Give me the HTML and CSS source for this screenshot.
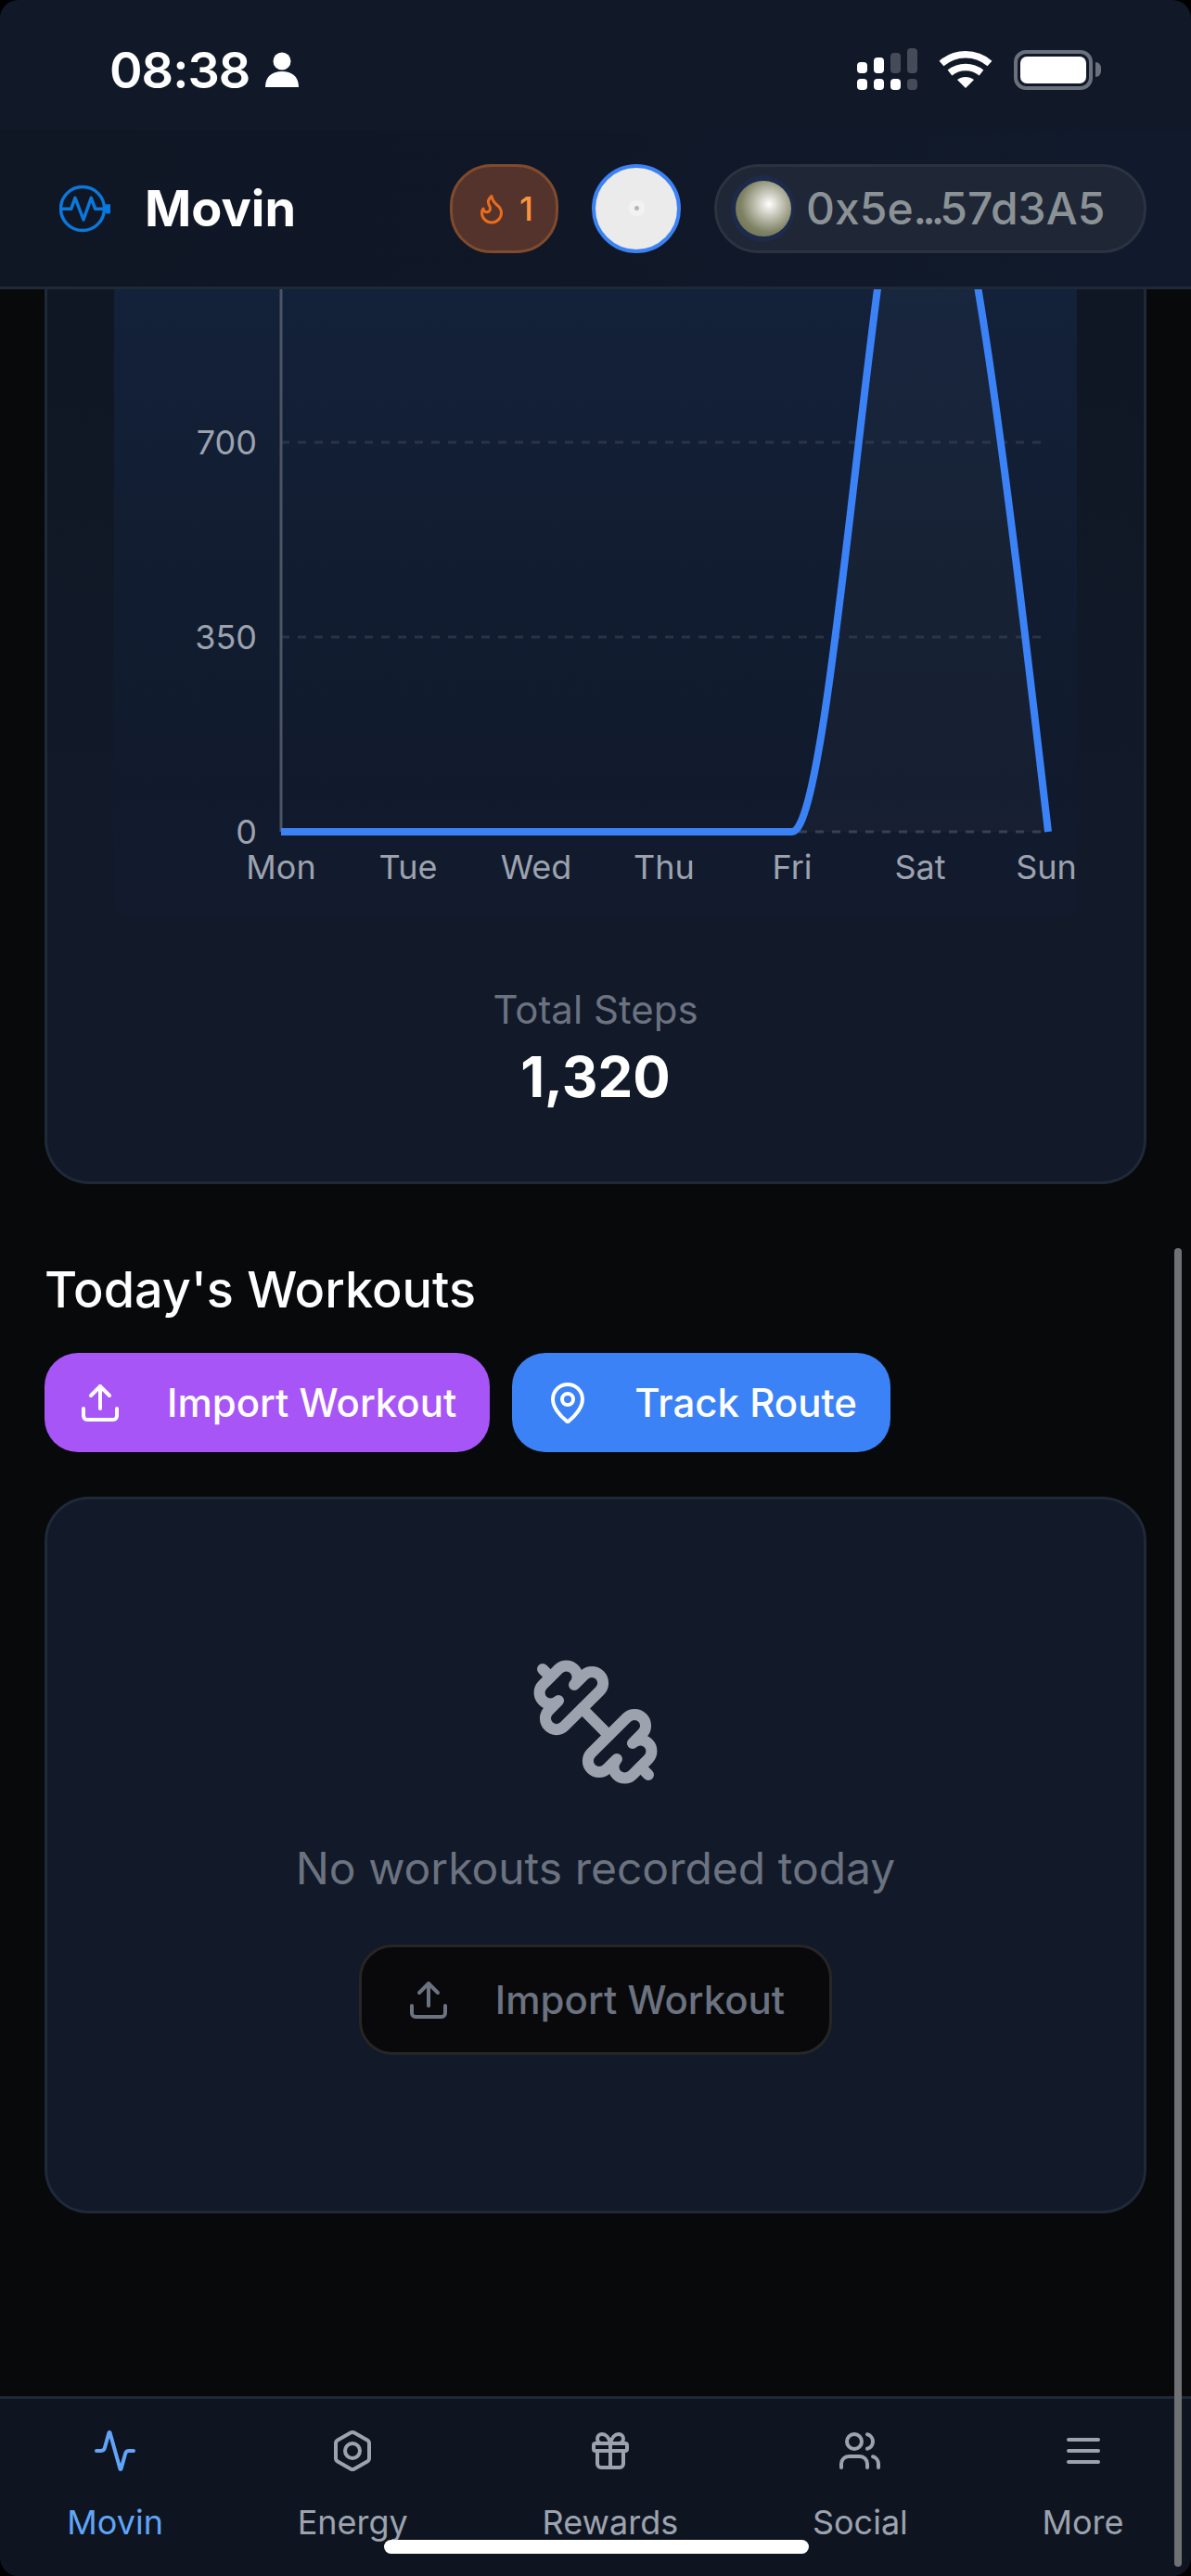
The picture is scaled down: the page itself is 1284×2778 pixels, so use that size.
FILE: index.html
```html
<!DOCTYPE html>
<html lang="en">
<head>
    <meta charset="UTF-8">
    <meta name="viewport" content="width=device-width, initial-scale=1.0">
    <title>Movin</title>
    <link rel="stylesheet" href="styles.css">
</head>
<body>
    <div class="screen">
        <div class="top">
            <div class="status-bar">
                <div class="status-left">
                    <span class="clock">08:38</span>
                    <svg class="person" viewBox="0 0 36 38"><circle cx="18" cy="10" r="9.5" fill="#fff"/><path d="M0 38c0-12 8-17 18-17s18 5 18 17z" fill="#fff"/></svg>
                </div>
                <div class="status-right">
                    <svg class="signal" viewBox="0 0 66 46">
                        <rect x="0" y="15" width="11" height="12" rx="4" fill="#fff"/>
                        <rect x="18" y="10" width="11" height="17" rx="4" fill="#fff"/>
                        <rect x="36" y="5" width="11" height="22" rx="4" fill="#454b58"/>
                        <rect x="54" y="0" width="11" height="27" rx="4" fill="#454b58"/>
                        <rect x="0" y="33" width="11" height="12" rx="4" fill="#fff"/>
                        <rect x="18" y="33" width="11" height="12" rx="4" fill="#fff"/>
                        <rect x="36" y="33" width="11" height="12" rx="4" fill="#fff"/>
                        <rect x="54" y="33" width="11" height="12" rx="4" fill="#454b58"/>
                    </svg>
                    <svg class="wifi" viewBox="0 0 58 42" fill="none" stroke="#fff" stroke-width="7.5">
                        <path d="M3 14.5c15-13 37-13 52 0"/>
                        <path d="M12 24.500c10-8 24-8 34 0"/>
                        <path d="M29 41 20 32c5-4 13-4 18 0z" fill="#fff" stroke="none"/>
                    </svg>
                    <div class="battery"><div class="battery-fill"></div></div>
                    <div class="battery-cap"></div>
                </div>
            </div>
            <header class="app-header">
                <div class="brand">
                    <svg class="brand-icon" viewBox="0 0 56 56" fill="none" stroke="#0a78dc" stroke-width="3.500">
                        <circle cx="25" cy="28" r="23.500"/>
                        <path d="M1 28.300h11.700L17 16.300l9 23.700 8.300-23.700 4.400 12H50" stroke-linejoin="round"/>
                        <rect x="50" y="23.300" width="5" height="10" fill="#0a78dc" stroke="none"/>
                    </svg>
                    <span class="brand-name">Movin</span>
                </div>
                <div class="header-actions">
                    <div class="streak">
                        <svg class="icon-flame" viewBox="0 0 24 24" fill="none" stroke="#ea6c1c" stroke-width="2" stroke-linecap="round" stroke-linejoin="round"><path d="M8.500 14.500A2.500 2.500 0 0 0 11 12c0-1.380-.5-2-1-3-1.072-2.143-.224-4.054 2-6 .5 2.500 2 4.900 4 6.500 2 1.600 3 3.500 3 5.500a7 7 0 1 1-14 0c0-1.153.433-2.294 1-3a2.500 2.500 0 0 0 2.500 2.500z"/></svg>
                        <span>1</span>
                    </div>
                    <div class="avatar"><span class="avatar-dot"></span></div>
                    <div class="wallet">
                        <span class="wallet-ring"><span class="wallet-orb"></span></span>
                        <span class="wallet-address">0x5e<span class="dots">...</span>57d3A5</span>
                    </div>
                </div>
            </header>
        </div>

        <main class="content">
            <section class="card steps-card">
                <div class="chart-panel">
                    <svg class="chart" viewBox="0 0 1038 675">
                        <path class="area" d="M731 585C777 585 823 -207 869 -207C915 -207 961 189 1007 585Z"/>
                        <line class="grid" x1="180" y1="165" x2="999" y2="165"/>
                        <line class="grid" x1="180" y1="375" x2="999" y2="375"/>
                        <line class="grid base" x1="180" y1="585" x2="1007" y2="585"/>
                        <line class="y-axis" x1="180" y1="0" x2="180" y2="585"/>
                        <path class="line" d="M180 585H731C777 585 823 -207 869 -207C915 -207 961 189 1007 585"/>
                        <text class="tick" x="154" y="178" text-anchor="end">700</text>
                        <text class="tick" x="154" y="388" text-anchor="end">350</text>
                        <text class="tick" x="154" y="598" text-anchor="end">0</text>
                        <text class="tick" x="180" y="636" text-anchor="middle">Mon</text>
                        <text class="tick" x="317" y="636" text-anchor="middle">Tue</text>
                        <text class="tick" x="455" y="636" text-anchor="middle">Wed</text>
                        <text class="tick" x="593" y="636" text-anchor="middle">Thu</text>
                        <text class="tick" x="731" y="636" text-anchor="middle">Fri</text>
                        <text class="tick" x="869" y="636" text-anchor="middle">Sat</text>
                        <text class="tick" x="1005" y="636" text-anchor="middle">Sun</text>
                    </svg>
                </div>
                <div class="steps-total">
                    <div class="steps-label">Total Steps</div>
                    <div class="steps-value">1,320</div>
                </div>
            </section>

            <h2 class="section-title">Today's Workouts</h2>
            <div class="workout-actions">
                <button class="btn btn-purple">
                    <svg class="btn-icon" viewBox="0 0 24 24"><path d="M21 15v4a2 2 0 0 1-2 2H5a2 2 0 0 1-2-2v-4"/><polyline points="17 8 12 3 7 8"/><line x1="12" x2="12" y1="3" y2="15"/></svg>
                    Import Workout
                </button>
                <button class="btn btn-blue">
                    <svg class="btn-icon" viewBox="0 0 24 24"><path d="M20 10c0 4.993-5.539 10.193-7.399 11.799a1 1 0 0 1-1.202 0C9.539 20.193 4 14.993 4 10a8 8 0 0 1 16 0"/><circle cx="12" cy="10" r="3"/></svg>
                    Track Route
                </button>
            </div>

            <section class="card empty-card">
                <svg class="dumbbell" viewBox="0 0 24 24"><g transform="matrix(-1 0 0 1 24 0)"><path d="M17.596 12.768a2 2 0 1 0 2.829-2.829l-1.768-1.767a2 2 0 0 0 2.828-2.829l-2.828-2.828a2 2 0 0 0-2.829 2.828l-1.767-1.768a2 2 0 1 0-2.829 2.829z"/><path d="m2.500 21.500 1.400-1.400"/><path d="m20.100 3.900 1.400-1.400"/><path d="M5.343 21.485a2 2 0 1 0 2.829-2.828l1.767 1.768a2 2 0 1 0 2.829-2.829l-6.364-6.364a2 2 0 1 0-2.829 2.829l1.768 1.767a2 2 0 0 0-2.828 2.829z"/><path d="m9.600 14.400 4.800-4.800"/></g></svg>
                <p class="empty-text">No workouts recorded today</p>
                <button class="btn btn-dark">
                    <svg class="btn-icon" viewBox="0 0 24 24"><path d="M21 15v4a2 2 0 0 1-2 2H5a2 2 0 0 1-2-2v-4"/><polyline points="17 8 12 3 7 8"/><line x1="12" x2="12" y1="3" y2="15"/></svg>
                    Import Workout
                </button>
            </section>
        </main>

        <nav class="bottom-nav">
            <div class="nav-item active">
                <svg class="nav-icon" viewBox="0 0 24 24"><path d="M22 12h-2.480a2 2 0 0 0-1.930 1.460l-2.350 8.360a.25.25 0 0 1-.480 0L9.240 2.180a.25.25 0 0 0-.480 0l-2.350 8.360A2 2 0 0 1 4.490 12H2"/></svg>
                <span>Movin</span>
            </div>
            <div class="nav-item">
                <svg class="nav-icon" viewBox="0 0 24 24"><path d="M21 16V8a2 2 0 0 0-1-1.730l-7-4a2 2 0 0 0-2 0l-7 4A2 2 0 0 0 3 8v8a2 2 0 0 0 1 1.730l7 4a2 2 0 0 0 2 0l7-4A2 2 0 0 0 21 16z"/><circle cx="12" cy="12" r="4"/></svg>
                <span>Energy</span>
            </div>
            <div class="nav-item">
                <svg class="nav-icon" viewBox="0 0 24 24"><rect x="3" y="8" width="18" height="4" rx="1"/><path d="M12 8v13"/><path d="M19 12v7a2 2 0 0 1-2 2H7a2 2 0 0 1-2-2v-7"/><path d="M7.500 8a2.500 2.500 0 0 1 0-5A4.800 8 0 0 1 12 8a4.800 8 0 0 1 4.500-5 2.500 2.500 0 0 1 0 5"/></svg>
                <span>Rewards</span>
            </div>
            <div class="nav-item">
                <svg class="nav-icon" viewBox="0 0 24 24"><path d="M16 21v-2a4 4 0 0 0-4-4H6a4 4 0 0 0-4 4v2"/><circle cx="9" cy="7" r="4"/><path d="M22 21v-2a4 4 0 0 0-3-3.870"/><path d="M16 3.130a4 4 0 0 1 0 7.750"/></svg>
                <span>Social</span>
            </div>
            <div class="nav-item">
                <svg class="nav-icon" viewBox="0 0 24 24"><line x1="4" x2="20" y1="12" y2="12"/><line x1="4" x2="20" y1="6" y2="6"/><line x1="4" x2="20" y1="18" y2="18"/></svg>
                <span>More</span>
            </div>
        </nav>

        <div class="scrollbar"></div>
        <div class="home-indicator"></div>
    </div>
</body>
</html>
```

FILE: styles.css
```css
* {
    box-sizing: border-box;
}
html, body {
    margin: 0;
    height: 100%;
    background: #000;
}
body {
    font-family: 'Inter', sans-serif;
    color: #fff;
}
.screen {
    position: relative;
    width: 1284px;
    height: 2778px;
    background: #08090b;
    border-radius: 20px;
    overflow: hidden;
    display: flex;
    flex-direction: column;
}

/* status bar + app header */
.top {
    flex: none;
    height: 312px;
    background: #111928;
    border-bottom: 3px solid #1f2937;
}
.status-bar {
    height: 140px;
    display: flex;
    justify-content: space-between;
    align-items: center;
    padding: 24px 97px 14px 118px;
}
.status-left {
    display: flex;
    align-items: center;
    gap: 17px;
}
.clock {
    font-size: 54px;
    font-weight: 600;
    letter-spacing: -1px;
}
.person {
    width: 36px;
    height: 38px;
}
.status-right {
    display: flex;
    align-items: center;
}
.signal {
    width: 66px;
    height: 46px;
    margin-right: 22px;
}
.wifi {
    width: 58px;
    height: 42px;
    margin-right: 23px;
}
.battery {
    width: 85px;
    height: 43px;
    border: 4px solid #6a707c;
    border-radius: 13px;
    padding: 3px;
}
.battery-fill {
    height: 100%;
    background: #fff;
    border-radius: 7px;
}
.battery-cap {
    width: 6px;
    height: 16px;
    margin-left: 3px;
    background: #6a707c;
    border-radius: 0 8px 8px 0;
}
.app-header {
    height: 169px;
    display: flex;
    justify-content: space-between;
    align-items: center;
    padding: 0 48px 0 64px;
    background: linear-gradient(90deg, #0f1624, #111a2c);
}
.brand {
    display: flex;
    align-items: center;
    gap: 36px;
}
.brand-icon {
    width: 56px;
    height: 56px;
}
.brand-name {
    font-size: 54px;
    font-weight: 700;
}
.header-actions {
    display: flex;
    align-items: center;
    gap: 36px;
}
.streak {
    width: 117px;
    height: 96px;
    display: flex;
    align-items: center;
    justify-content: center;
    gap: 12px;
    background: #53332b;
    border: 3px solid #804a2c;
    border-radius: 45px;
    color: #fb923c;
    font-size: 36px;
    font-weight: 500;
}
.icon-flame {
    width: 36px;
    height: 36px;
}
.avatar {
    width: 96px;
    height: 96px;
    display: flex;
    align-items: center;
    justify-content: center;
    background: #ebebeb;
    border: 4px solid #3b82f6;
    border-radius: 50%;
}
.avatar-dot {
    width: 5px;
    height: 5px;
    border-radius: 50%;
    background: #b5b5b5;
    box-shadow: 0 0 0 6px #f2f2f2;
}
.wallet {
    width: 466px;
    height: 96px;
    display: flex;
    align-items: center;
    gap: 12px;
    padding-left: 15px;
    background: #1f2636;
    border: 3px solid #2b3240;
    border-radius: 48px;
}
.wallet-ring {
    width: 69px;
    height: 72px;
    display: flex;
    align-items: center;
    justify-content: center;
    background: #1e2a4a;
    border-radius: 50%;
}
.wallet-orb {
    width: 60px;
    height: 60px;
    border-radius: 50%;
    background: radial-gradient(circle at 60% 42%, #fff 0, #c9cabd 25%, #7f8364 60%, #636846 100%);
}
.wallet-address {
    font-size: 48px;
    font-weight: 500;
    color: #8b9296;
}
.dots {
    letter-spacing: -5px;
}

/* scrolled content */
.content {
    flex: 1;
    min-height: 0;
    padding: 0 48px;
}
.card {
    background: #121928;
    border: 3px solid #1f2937;
    border-radius: 48px;
}
.steps-card {
    height: 965px;
    border-top: none;
    border-radius: 0 0 48px 48px;
    padding: 0 72px;
    background: linear-gradient(180deg, #0f1624, #121928 60%);
}
.chart-panel {
    height: 675px;
    background: linear-gradient(180deg, #13213a, #121d31 40%, #111a2d 80%, #131a2d);
    border-radius: 0 0 12px 12px;
}
.chart {
    display: block;
    width: 1038px;
    height: 675px;
}
.chart .area {
    fill: #fff;
    fill-opacity: 0.025;
}
.chart .grid {
    stroke: #374151;
    stroke-opacity: 0.65;
    stroke-width: 3;
    stroke-dasharray: 9 9;
}
.chart .base {
    stroke: #4b5563;
}
.chart .y-axis {
    stroke: #4b5563;
    stroke-width: 3;
}
.chart .line {
    fill: none;
    stroke: #3b82f6;
    stroke-width: 8;
}
.chart .tick {
    font-family: 'Inter', sans-serif;
    font-size: 36px;
    fill: #9ca3af;
}
.steps-total {
    margin-top: 72px;
    text-align: center;
}
.steps-label {
    font-size: 42px;
    line-height: 60px;
    color: #6b7280;
}
.steps-value {
    font-size: 60px;
    line-height: 84px;
    font-weight: 700;
}
.section-title {
    margin: 78px 0 32px;
    font-size: 54px;
    line-height: 72px;
    font-weight: 500;
}
.workout-actions {
    display: flex;
    gap: 24px;
}
.btn {
    display: inline-flex;
    align-items: center;
    gap: 48px;
    height: 107px;
    padding: 0 36px;
    border: none;
    border-radius: 36px;
    font-family: 'Inter', sans-serif;
    font-size: 42px;
    font-weight: 500;
    color: #fff;
}
.btn-purple {
    background: #a855f7;
}
.btn-blue {
    background: #3b82f6;
}
.btn-dark {
    height: 119px;
    padding: 0 48px;
    background: #09090b;
    border: 3px solid #262626;
    color: #6b7280;
}
.btn-icon {
    width: 48px;
    height: 48px;
    fill: none;
    stroke: currentColor;
    stroke-width: 2;
    stroke-linecap: round;
    stroke-linejoin: round;
}
.empty-card {
    height: 773px;
    margin-top: 48px;
    padding-top: 168px;
    display: flex;
    flex-direction: column;
    align-items: center;
}
.dumbbell {
    width: 144px;
    height: 144px;
    fill: none;
    stroke: #9ca3af;
    stroke-width: 2;
    stroke-linecap: round;
    stroke-linejoin: round;
}
.empty-text {
    margin: 50px 0 46px;
    font-size: 48px;
    line-height: 72px;
    color: #6b7280;
}

/* bottom navigation */
.bottom-nav {
    flex: none;
    height: 194px;
    padding-top: 32px;
    display: flex;
    justify-content: space-around;
    align-items: flex-start;
    background: #0f1520;
    border-top: 3px solid #1f2937;
}
.nav-item {
    display: flex;
    flex-direction: column;
    align-items: center;
    gap: 29px;
    font-size: 36px;
    line-height: 48px;
    color: #9ca3af;
}
.nav-item.active {
    color: #60a5fa;
}
.nav-icon {
    width: 48px;
    height: 48px;
    fill: none;
    stroke: currentColor;
    stroke-width: 2;
    stroke-linecap: round;
    stroke-linejoin: round;
}
.scrollbar {
    position: absolute;
    top: 1346px;
    right: 10px;
    width: 8px;
    height: 1422px;
    background: #6f7174;
    border-radius: 4px;
}
.home-indicator {
    position: absolute;
    left: 414px;
    bottom: 24px;
    width: 458px;
    height: 15px;
    background: #fff;
    border-radius: 8px;
}
```
